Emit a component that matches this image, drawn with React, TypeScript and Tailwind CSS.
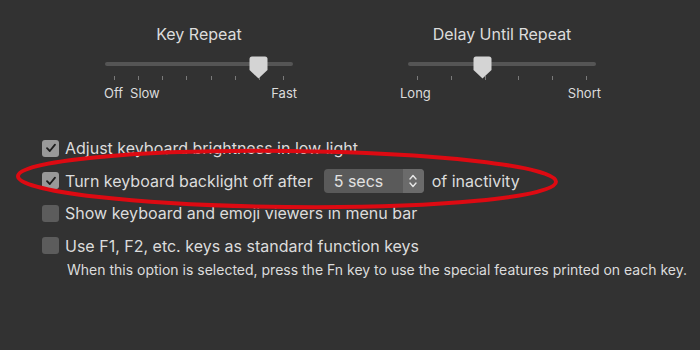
import React from "react";

function Thumb({ left }: { left: number }) {
  return (
    <svg
      className="absolute top-[-6px]"
      style={{ left }}
      width="19"
      height="23"
      viewBox="0 0 19 23"
    >
      <path
        d="M3 0.5 H16 Q18.5 0.5 18.5 3 V14 L9.5 22.5 L0.5 14 V3 Q0.5 0.5 3 0.5 Z"
        fill="#d4d4d4"
      />
    </svg>
  );
}

function Slider({
  title,
  ticks,
  thumb,
  labels,
}: {
  title: string;
  ticks: number;
  thumb: number;
  labels: React.ReactNode;
}) {
  return (
    <div className="flex w-[188px] flex-col">
      <div className="text-center text-[16px] leading-[20px] text-[#dcdcdc]">{title}</div>
      <div className="relative mt-[18px] h-[4px] rounded-full bg-[#555555]">
        <Thumb left={thumb} />
      </div>
      <div className="mt-[10px] flex h-[4px] justify-between px-[9px]">
        {Array.from({ length: ticks }).map((_, i) => (
          <div key={i} className="h-[4px] w-[1px] bg-[#7a7a7a]" />
        ))}
      </div>
      <div className="mt-[5px] flex text-[13px] leading-[16px] text-[#dcdcdc]">{labels}</div>
    </div>
  );
}

function Check({ checked }: { checked: boolean }) {
  return checked ? (
    <div className="flex h-[17px] w-[17px] shrink-0 items-center justify-center rounded-[3px] bg-[#999999]">
      <svg width="12" height="12" viewBox="0 0 12 12">
        <path d="M2 6.2 L4.8 9 L10 2.6" fill="none" stroke="#1e1e1e" strokeWidth="1.8" strokeLinecap="round" strokeLinejoin="round" />
      </svg>
    </div>
  ) : (
    <div className="h-[17px] w-[17px] shrink-0 rounded-[3px] bg-[#5c5c5c]" />
  );
}

export default function App() {
  return (
    <div
      className="relative h-[350px] w-[700px] overflow-hidden bg-[#323232] text-[#dcdcdc]"
      style={{ fontFamily: "Inter, 'Noto Sans', sans-serif" }}
    >
      <div className="flex pl-[105px] pt-[24px]">
        <Slider
          title="Key Repeat"
          ticks={8}
          thumb={144}
          labels={
            <>
              <span className="-ml-[1px]">Off</span>
              <span className="ml-[7px]">Slow</span>
              <span className="-mr-[4px] ml-auto">Fast</span>
            </>
          }
        />
        <div className="w-[115px]" />
        <Slider
          title="Delay Until Repeat"
          ticks={6}
          thumb={65}
          labels={
            <>
              <span className="-ml-[8px]">Long</span>
              <span className="-mr-[5px] ml-auto">Short</span>
            </>
          }
        />
      </div>

      <div className="mt-[31px] flex flex-col pl-[42px] text-[16px]">
        <div className="flex h-[32.5px] items-center gap-[6px]">
          <Check checked />
          <span>Adjust keyboard brightness in low light</span>
        </div>
        <div className="flex h-[32.5px] items-center gap-[6px]">
          <Check checked />
          <span>Turn keyboard backlight off after</span>
          <div className="ml-[5px] flex h-[24px] w-[100px] overflow-hidden rounded-[4px] bg-[#5a5a5a]">
            <div className="flex flex-1 items-center pl-[10px] text-[#e2e2e2]">5 secs</div>
            <div className="flex w-[21px] items-center justify-center bg-[#6b6b6b]">
              <svg width="10" height="16" viewBox="0 0 10 16">
                <path d="M2 6 L5 2.5 L8 6" fill="none" stroke="#e6e6e6" strokeWidth="1.4" strokeLinecap="round" strokeLinejoin="round" />
                <path d="M2 10 L5 13.5 L8 10" fill="none" stroke="#e6e6e6" strokeWidth="1.4" strokeLinecap="round" strokeLinejoin="round" />
              </svg>
            </div>
          </div>
          <span className="ml-[2px]">of inactivity</span>
        </div>
        <div className="flex h-[32.5px] items-center gap-[6px]">
          <Check checked={false} />
          <span>Show keyboard and emoji viewers in menu bar</span>
        </div>
        <div className="flex h-[32.5px] items-center gap-[6px]">
          <Check checked={false} />
          <span>Use F1, F2, etc. keys as standard function keys</span>
        </div>
        <div className="pl-[25px] text-[14px] leading-[16px]">
          When this option is selected, press the Fn key to use the special features printed on each key.
        </div>
      </div>

      <svg className="pointer-events-none absolute inset-0" width="700" height="350">
        <ellipse cx="287" cy="179" rx="269" ry="28" fill="none" stroke="#dd0a12" strokeWidth="4" transform="rotate(0.6 287 179)" />
      </svg>
    </div>
  );
}
